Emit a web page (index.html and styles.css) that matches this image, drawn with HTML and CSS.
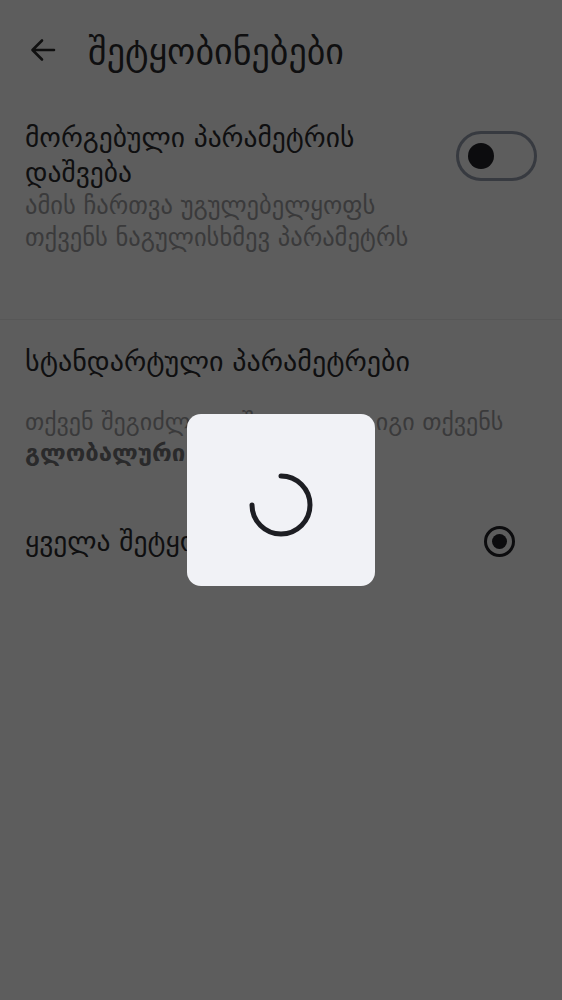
FILE: index.html
```html
<!DOCTYPE html>
<html lang="ka">
<head>
<meta charset="utf-8">
<title>შეტყობინებები</title>
<link rel="stylesheet" href="styles.css">
</head>
<body>
<div class="page">
  <header class="appbar">
    <svg class="back" width="28" height="28" viewBox="0 0 28 28" aria-hidden="true">
      <path d="M25 14H4M13 4.5L3.5 14L13 23.5" fill="none" stroke="#101010" stroke-width="2.6" stroke-linecap="round" stroke-linejoin="round"/>
    </svg>
    <h1 class="title">შეტყობინებები</h1>
  </header>

  <section class="item">
    <div class="item-text">
      <div class="item-title">მორგებული პარამეტრის დაშვება</div>
      <div class="item-sub">ამის ჩართვა უგულებელყოფს თქვენს ნაგულისხმევ პარამეტრს</div>
    </div>
    <div class="switch"><span class="knob"></span></div>
  </section>

  <div class="divider"></div>

  <section class="defaults">
    <h2 class="section-title">სტანდარტული პარამეტრები</h2>
    <p class="desc">თქვენ შეგიძლიათ შეცვალოთ იგი თქვენს <b>გლობალური</b> პარამეტრებით.</p>
    <div class="radio-row">
      <span class="radio-label">ყველა შეტყობინება</span>
      <span class="radio"><span class="dot"></span></span>
    </div>
  </section>
</div>

<div class="scrim">
  <div class="dialog">
    <svg class="spinner" width="70" height="70" viewBox="0 0 70 70" aria-hidden="true">
      <path d="M35 6 A29 29 0 1 1 6 35" fill="none" stroke="#1d1e23" stroke-width="5" stroke-linecap="round"/>
    </svg>
  </div>
</div>
</body>
</html>
```

FILE: styles.css
```css
html, body {
  margin: 0;
  padding: 0;
}
body {
  background: #5d5d5d;
  font-family: "DejaVu Sans", "Noto Sans", sans-serif;
  color: #0f0f10;
  width: 562px;
  height: 1000px;
  overflow: hidden;
}
.page {
  display: flex;
  flex-direction: column;
}
.appbar {
  height: 100px;
  display: flex;
  align-items: center;
  padding-left: 29px;
  gap: 31px;
  box-sizing: border-box;
}
.back {
  display: block;
  flex: none;
}
.title {
  margin: 0;
  font-size: 36px;
  font-weight: normal;
  line-height: 44px;
  padding-top: 3px;
}
.item {
  display: flex;
  align-items: flex-start;
  justify-content: space-between;
  padding: 20px 25px 65px 25px;
}
.item-text {
  width: 400px;
}
.item-title {
  font-size: 27.5px;
  line-height: 35px;
}
.item-sub {
  font-size: 24.5px;
  line-height: 32px;
  color: #3a3a3b;
}
.switch {
  flex: none;
  width: 81px;
  height: 50px;
  box-sizing: border-box;
  border: 3px solid #373a40;
  border-radius: 25px;
  margin-top: 11px;
  display: flex;
  align-items: center;
  padding-left: 9px;
}
.knob {
  width: 26px;
  height: 26px;
  border-radius: 50%;
  background: #0c0c0e;
}
.divider {
  height: 1px;
  background: #575757;
}
.defaults {
  padding: 24px 25px 0 25px;
  display: flex;
  flex-direction: column;
}
.section-title {
  margin: 0;
  font-size: 28px;
  font-weight: normal;
  line-height: 35px;
}
.desc {
  margin: 28px 0 0 0;
  font-size: 24px;
  line-height: 31px;
  color: #3a3a3b;
}
.desc b {
  color: #2a2a2b;
  font-weight: 600;
}
.radio-row {
  margin-top: 55px;
  display: flex;
  align-items: center;
  justify-content: space-between;
  padding-right: 22px;
}
.radio-label {
  font-size: 27.5px;
  line-height: 35px;
}
.radio {
  width: 31px;
  height: 31px;
  box-sizing: border-box;
  border: 3px solid #0c0c0e;
  border-radius: 50%;
  display: flex;
  align-items: center;
  justify-content: center;
}
.dot {
  width: 15px;
  height: 15px;
  border-radius: 50%;
  background: #0c0c0e;
}
.scrim {
  position: fixed;
  inset: 0;
  display: flex;
  align-items: center;
  justify-content: center;
}
.dialog {
  width: 188px;
  height: 172px;
  background: #f1f2f6;
  border-radius: 14px;
  display: flex;
  align-items: center;
  justify-content: center;
}
.spinner {
  display: block;
  margin-top: 10px;
}
```
